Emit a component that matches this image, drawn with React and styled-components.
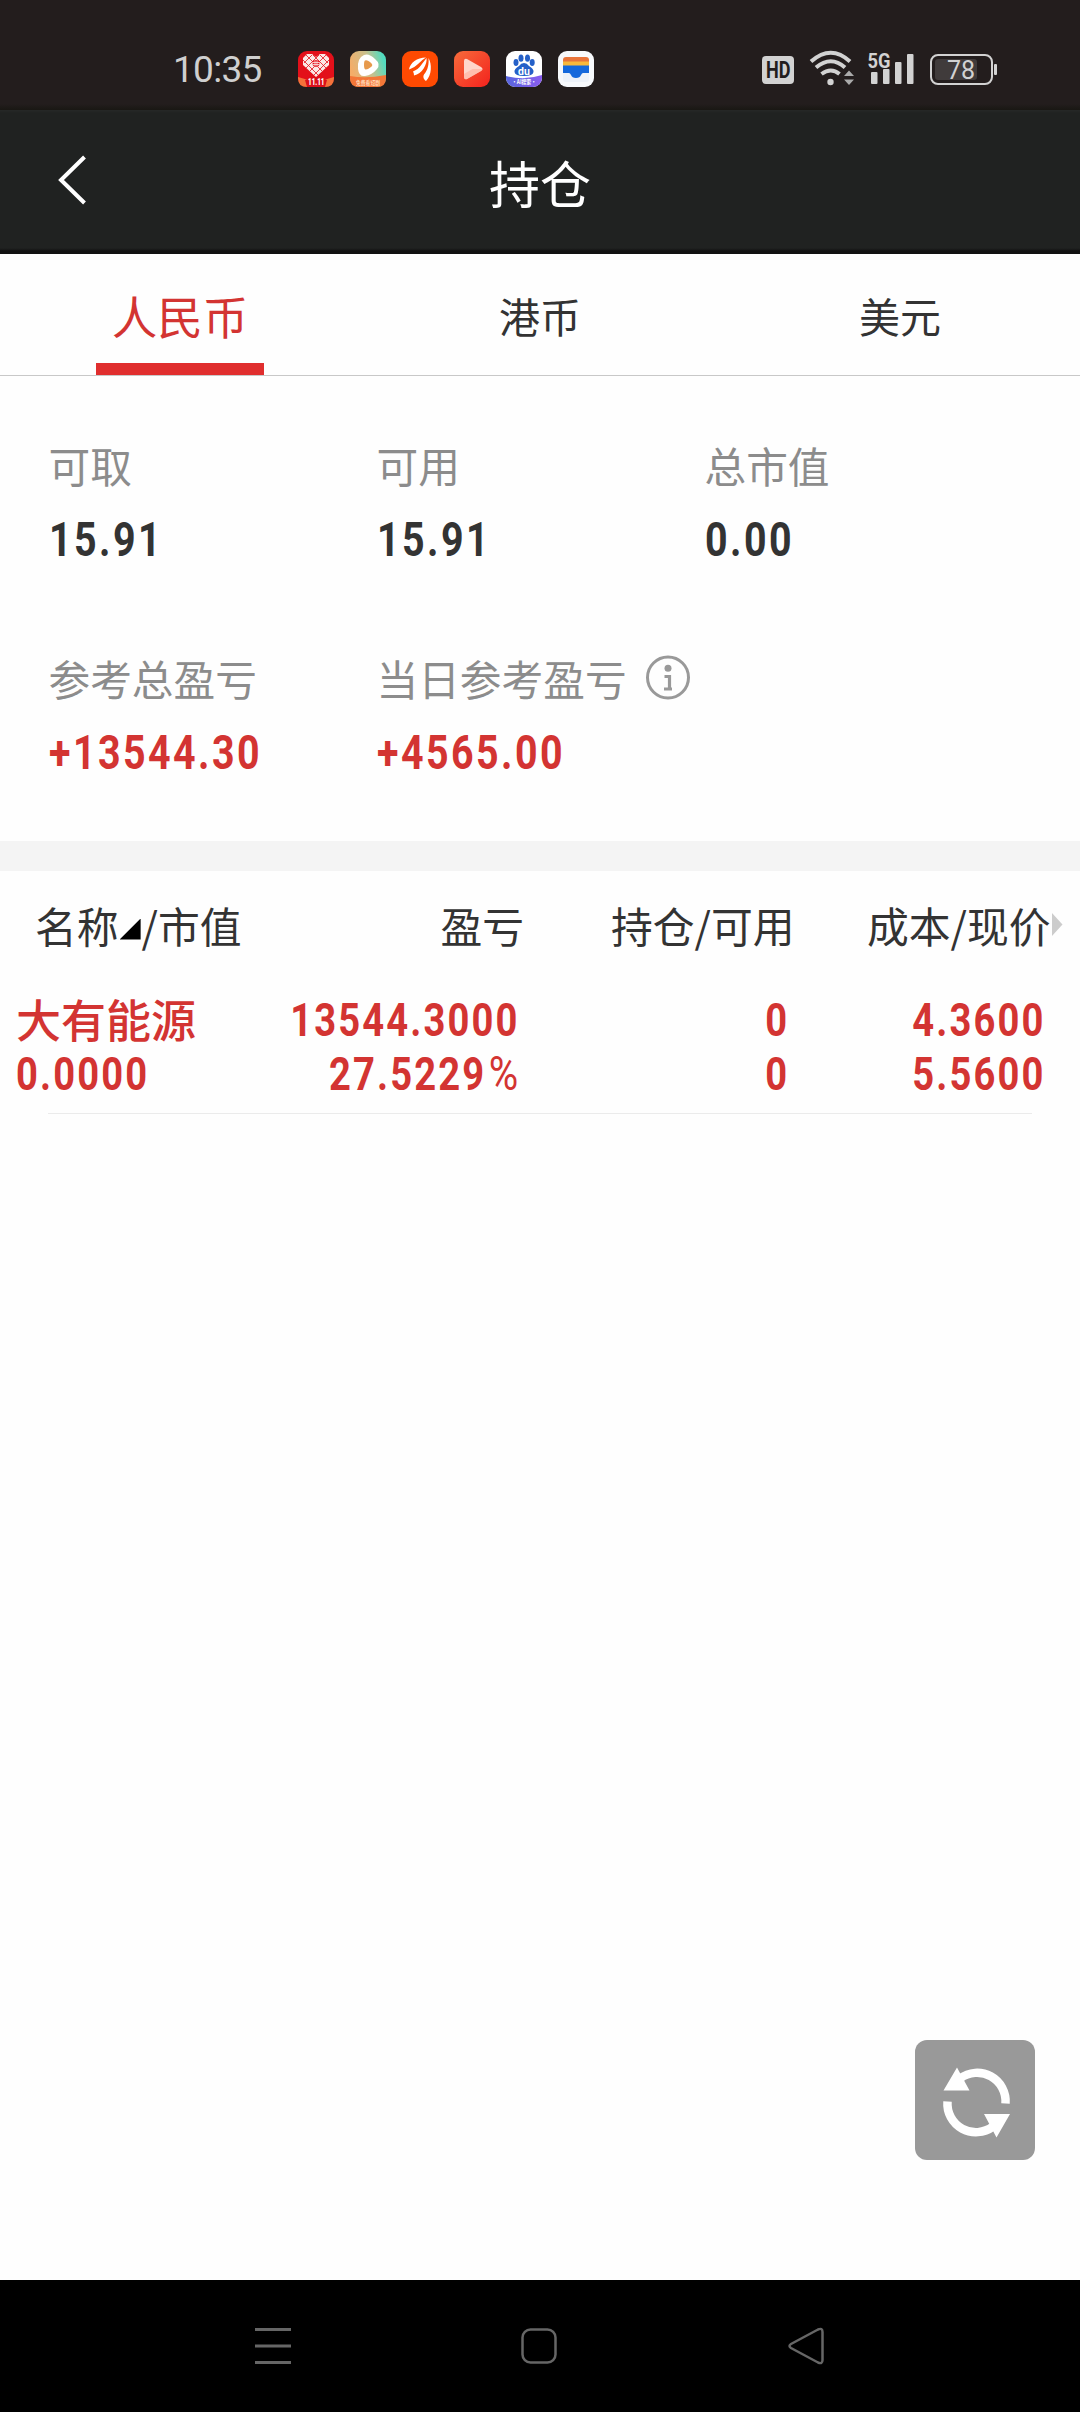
import React from "react";
import styled, { createGlobalStyle } from "styled-components";

const RED = "#d33432";
const CJK = '"Noto Sans CJK SC", sans-serif';
const DIGITS = 'Roboto, "Noto Sans CJK SC", sans-serif';

const GlobalStyle = createGlobalStyle`
  * { box-sizing: border-box; }
  body { margin: 0; background: #fefefe; }
`;

const Screen = styled.div`
  width: 1080px;
  height: 2412px;
  display: flex;
  flex-direction: column;
  background: #fefefe;
  font-family: ${CJK};
  color: #333;
  overflow: hidden;
`;

const StatusBar = styled.header`
  height: 110px;
  flex: none;
  display: flex;
  align-items: center;
  padding: 28px 82px 0 173px;
  background: linear-gradient(#231d1d 104px, #191713 110px);
`;

const Clock = styled.time`
  width: 125px;
  padding-top: 2px;
  font: 400 37px/40px Roboto, sans-serif;
  letter-spacing: -0.7px;
  color: #cfcfcf;
`;

const AppIcons = styled.div`
  display: flex;
  gap: 16px;
  svg { width: 36px; height: 36px; display: block; }
`;

const SystemIcons = styled.div`
  margin-left: auto;
  display: flex;
  svg { display: block; }
`;

const TitleBar = styled.nav`
  height: 144px;
  flex: none;
  display: grid;
  grid-template-columns: 140px 1fr 140px;
  align-items: center;
  background: linear-gradient(#262827 0, #202221 3px, #202221 138px, #111 141px);
`;

const BackButton = styled.button`
  border: 0;
  padding: 0 0 4px 57px;
  background: none;
  svg { display: block; }
`;

const Title = styled.h1`
  margin: 0;
  text-align: center;
  font-size: 51px;
  font-weight: 400;
  line-height: 60px;
  color: #fff;
`;

const Tabs = styled.div`
  height: 122px;
  flex: none;
  display: grid;
  grid-template-columns: repeat(3, 1fr);
  border-bottom: 1px solid #c8c8c8;
`;

const Tab = styled.div`
  display: flex;
  flex-direction: column;
  align-items: center;
  justify-content: space-between;
  padding-top: 31px;
  font-size: ${(p) => (p.$active ? 45.5 : 41)}px;
  line-height: 60px;
  color: ${(p) => (p.$active ? RED : "#333")};
`;

const TabMarker = styled.span`
  width: 168px;
  height: 12px;
  background: #e02e2e;
`;

const Summary = styled.section`
  height: 465px;
  flex: none;
  display: grid;
  grid-template-columns: repeat(3, 328px);
  grid-template-rows: 213px 1fr;
  padding: 59px 0 0 48.5px;
`;

const Label = styled.div`
  display: flex;
  align-items: center;
  height: 60px;
  font-size: 41.7px;
  line-height: 60px;
  color: #8c8c8c;
  white-space: nowrap;
  svg { margin-left: 18px; flex: none; }
`;

const Value = styled.div`
  width: max-content;
  margin-top: 15px;
  font-family: ${DIGITS};
  font-weight: 700;
  font-size: 48px;
  line-height: 60px;
  letter-spacing: 3px;
  transform: scaleX(0.82);
  transform-origin: left;
  color: ${(p) => (p.$gain ? RED : "#333")};
`;

const Band = styled.div`
  height: 30px;
  flex: none;
  background: #f4f4f4;
`;

const Row = styled.div`
  display: grid;
  grid-template-columns: 280px 244px 270.5px 256px 1fr;
`;

const HeadRow = styled(Row)`
  height: 107px;
  align-items: center;
  font-size: 41.8px;
  line-height: 60px;
`;

const HeadCell = styled.div`
  display: flex;
  align-items: center;
  white-space: nowrap;
  justify-content: ${(p) => (p.$first ? "flex-start" : "flex-end")};
  padding-left: ${(p) => (p.$first ? 35 : 0)}px;
`;

const SortMark = styled.i`
  width: 21px;
  height: 21px;
  margin: 9px 1px 0 1px;
  background: #000;
  clip-path: polygon(100% 0, 100% 100%, 0 100%);
`;

const MoreMark = styled.i`
  width: 11px;
  height: 24px;
  margin-left: 1px;
  background: #ccc;
  clip-path: polygon(0 0, 100% 50%, 0 100%);
`;

const Holding = styled(Row)`
  height: 135px;
  padding-top: 15px;
`;

const HoldingCell = styled.div`
  display: flex;
  flex-direction: column;
  align-items: ${(p) => (p.$first ? "flex-start" : "flex-end")};
  padding-left: ${(p) => (p.$first ? 16 : 0)}px;
  padding-right: ${(p) => p.$pad || 0}px;
  font-family: ${DIGITS};
  font-weight: 700;
  font-size: 46.5px;
  line-height: 54px;
  color: ${RED};
  white-space: nowrap;
`;

const Figure = styled.span`
  letter-spacing: 2.6px;
  transform: scaleX(0.82);
  transform-origin: ${(p) => (p.$left ? "left" : "right")};
`;

const StockName = styled.span`
  font-family: ${CJK};
  font-weight: 500;
  font-size: 45px;
  margin-top: -1px;
  margin-bottom: 1px;
`;

const Percent = styled.span`
  font-weight: 400;
  font-size: 49px;
  line-height: 0;
  margin-left: 3px;
`;

const Divider = styled.hr`
  width: 984px;
  margin: 0 48px;
  border: 0;
  height: 1px;
  background: #ebebeb;
`;

const Body = styled.main`
  flex: 1;
  display: flex;
  flex-direction: column;
`;

const RefreshButton = styled.button`
  width: 120px;
  height: 120px;
  margin: auto 45px 120px auto;
  padding: 0;
  border: 0;
  border-radius: 12px;
  background: #999;
  svg { display: block; }
`;

const NavBar = styled.footer`
  height: 132px;
  flex: none;
  display: flex;
  justify-content: space-between;
  padding: 46px 254.5px 0 252.5px;
  background: #000;
`;

const PddIcon = () => (
  <svg viewBox="0 0 36 36">
    <rect width="36" height="36" rx="9" fill="#e3101a" />
    <path d="M0 26Q18 33 36 26V27Q36 36 27 36H9Q0 36 0 27Z" fill="#f4713a" />
    <path d="M7 29Q18 24 29 29L27 36H9Z" fill="#d9101a" />
    <path d="M18 6L22 3H27L31 7V14L18 26L5 14V7L9 3H14Z" fill="#fbe9e6" />
    <path d="M6 12L14 4M8 17L21 4M12 20L28 4M16 24L31 9M30 12L22 4M28 17L15 4M24 20L8 4M20 24L5 9" stroke="#e3101a" strokeWidth=".8" />
    <circle cx="18" cy="12.500" r="3.400" fill="#e3101a" />
    <path d="M15 11.500H21M15 13.500H21M17 9.500V15.500M19 9.500V15.500" stroke="#fbe9e6" strokeWidth=".8" />
    <text x="10" y="34" textLength="16.500" lengthAdjust="spacingAndGlyphs" fontFamily="Roboto, sans-serif" fontWeight="900" fontSize="8.500" fill="#fff">11.11</text>
  </svg>
);

const VideoIcon = () => (
  <svg viewBox="0 0 36 36">
    <defs>
      <linearGradient id="video" x1="0" y1=".4" x2="1" y2=".1">
        <stop offset="0" stopColor="#f4ad68" />
        <stop offset=".5" stopColor="#c9c08d" />
        <stop offset=".9" stopColor="#52dcc0" />
      </linearGradient>
    </defs>
    <rect width="36" height="36" rx="9" fill="url(#video)" />
    <path d="M0 25Q16 28 36 24V27Q36 36 27 36H9Q0 36 0 27Z" fill="#f37738" />
    <path d="M14 4Q19 2 25 8Q31 13 27 18Q22 24 15 25Q9 26 8 18Q7 7 14 4Z" fill="#fff" />
    <path d="M15 9.500Q17 8.500 20 11Q24 14 21 16Q17 19 15.500 18.500Q14 18 14 14Q14 10 15 9.500Z" fill="#e79a4c" />
    <text x="6" y="33.500" textLength="24" lengthAdjust="spacingAndGlyphs" fontFamily='"Noto Sans CJK SC", sans-serif' fontSize="5.500" fontWeight="700" fill="#ffd9b8">免费看短剧</text>
  </svg>
);

const WingIcon = () => (
  <svg viewBox="0 0 36 36">
    <rect width="36" height="36" rx="9" fill="#fe4a02" />
    <path d="M7 18.500C8 12 15 6.500 24 6.500C19 9 15 16 7 18.500Z" fill="#fff" />
    <path d="M11 20.500C18 18 21 11 24.500 7C25.500 13 20 23 12 24.500Q12 22 11 20.500Z" fill="#fff" />
    <path d="M26.500 7C30 13 30 24 24 30C21 28 21 25 22 23.500C26 19 27 13 26.500 7Z" fill="#fff" />
  </svg>
);

const PlayIcon = () => (
  <svg viewBox="0 0 36 36">
    <defs>
      <linearGradient id="play" x1="0" y1="0" x2="1" y2="1">
        <stop offset="0" stopColor="#f76b3b" />
        <stop offset="1" stopColor="#f3221d" />
      </linearGradient>
    </defs>
    <rect width="36" height="36" rx="9" fill="url(#play)" />
    <path d="M10 10Q10 7 13 8L27 16Q30 18 27 20L13 28Q10 29 10 26Z" fill="#ffd6cb" />
    <path d="M18.500 18L28.500 18Q28 19.500 27 20L13 28Q10 29 10 26V23Z" fill="#ffb3a3" opacity=".7" />
  </svg>
);

const DuIcon = () => (
  <svg viewBox="0 0 36 36">
    <defs>
      <clipPath id="duClip"><rect width="36" height="36" rx="9" /></clipPath>
      <linearGradient id="du">
        <stop offset="0" stopColor="#5866df" />
        <stop offset="1" stopColor="#8a5cf0" />
      </linearGradient>
    </defs>
    <g clipPath="url(#duClip)">
      <rect width="36" height="36" fill="#fff" />
      <path d="M0 25Q18 30 36 24V36H0Z" fill="url(#du)" />
      <g fill="#2560c8">
        <ellipse cx="10" cy="11.500" rx="2.500" ry="3.400" />
        <ellipse cx="15" cy="7.200" rx="2.500" ry="3.600" />
        <ellipse cx="21.500" cy="7.200" rx="2.500" ry="3.600" />
        <ellipse cx="26.200" cy="11.500" rx="2.500" ry="3.400" />
        <path d="M18 12Q21 12 23 15Q28 18 27.500 21Q27 25 18 25Q9 25 8.500 21Q8 18 13 15Q15 12 18 12Z" />
      </g>
      <text x="18" y="23.500" textAnchor="middle" fontFamily="Roboto, sans-serif" fontWeight="700" fontSize="10.500" fill="#fff">du</text>
      <text x="6" y="33.300" textLength="24" lengthAdjust="spacingAndGlyphs" fontFamily='"Noto Sans CJK SC", sans-serif' fontWeight="700" fontSize="6" fill="#fff">·AI搜索·</text>
    </g>
  </svg>
);

const WalletIcon = () => (
  <svg viewBox="0 0 36 36">
    <rect width="36" height="36" rx="9" fill="#f7f9fc" />
    <path d="M5 22H31V28Q31 31 28 31H8Q5 31 5 28Z" fill="#edf2f9" />
    <path d="M5 9Q5 6 8 6H28Q31 6 31 9V14H5Z" fill="#e8743b" />
    <path d="M5 10.500H31V16H5Z" fill="#f9b93c" />
    <path d="M5 14.500H31V22H25Q24 22 23 24Q22 27 18 27Q14 27 13 24Q12 22 11 22H5Z" fill="#1468dc" />
  </svg>
);

const SystemGlyphs = () => (
  <svg width="240" height="40" viewBox="758 49 240 40" fill="#d2d2d2">
    <rect x="762" y="56" width="32" height="28" rx="4" />
    <text x="766" y="78" textLength="24.500" lengthAdjust="spacingAndGlyphs" fontFamily="Roboto, sans-serif" fontWeight="700" fontSize="23" fill="#231d1d">HD</text>
    <g fill="none" stroke="#d2d2d2" strokeWidth="4">
      <path d="M811 61.500Q831 44 850 61.500" />
      <path d="M816 67.500Q831 55 845 67.500" />
      <path d="M821.500 74Q831 67 839.500 74" />
    </g>
    <circle cx="830.500" cy="82" r="3.200" />
    <path d="M844 76L849 70.500L854 76ZM844 79.500H854L849 85Z" fill="#aaa" />
    <text x="867.500" y="67.500" textLength="23" lengthAdjust="spacingAndGlyphs" fontFamily="Roboto, sans-serif" fontWeight="700" fontSize="21">5G</text>
    <rect x="871" y="72" width="6.500" height="12" rx="1" />
    <rect x="883" y="69" width="6.500" height="15" rx="1" />
    <rect x="895" y="62" width="6.500" height="22" rx="1" />
    <rect x="907" y="54" width="6.500" height="30" rx="1" />
    <rect x="931" y="55" width="61" height="29" rx="7" fill="none" stroke="#d2d2d2" strokeWidth="2" />
    <rect x="935" y="59" width="42" height="21" rx="3" fill="#403b3b" />
    <rect x="994" y="64" width="3" height="11" rx="1" />
    <text x="961" y="78.500" textAnchor="middle" fontFamily="Roboto, sans-serif" fontSize="25">78</text>
  </svg>
);

const InfoGlyph = () => (
  <svg width="46" height="46" viewBox="0 0 46 46">
    <circle cx="23" cy="22.500" r="20.500" fill="none" stroke="#999" strokeWidth="3" />
    <circle cx="23" cy="13.300" r="3.500" fill="#999" />
    <path d="M19.500 21.500H24.500V33M19 34H27" fill="none" stroke="#999" strokeWidth="3.200" />
  </svg>
);

const RefreshGlyph = () => (
  <svg width="120" height="120" viewBox="0 0 120 120">
    <g fill="none" stroke="#fff" strokeWidth="8.500">
      <path d="M45 38.500A28.500 28.500 0 0 1 90.500 63.500" />
      <path d="M32.500 61.500A28.500 28.500 0 0 0 78 86.500" />
    </g>
    <path d="M42 27.500L54.500 50.500H28.500ZM81.500 97.500L69 74H95Z" fill="#fff" />
  </svg>
);

const stats = [
  { label: "可取", value: "15.91" },
  { label: "可用", value: "15.91" },
  { label: "总市值", value: "0.00" },
  { label: "参考总盈亏", value: "+13544.30", gain: true },
  { label: "当日参考盈亏", value: "+4565.00", gain: true, info: true },
];

export default function App() {
  return (
    <Screen>
      <GlobalStyle />
      <StatusBar>
        <Clock>10:35</Clock>
        <AppIcons>
          <PddIcon />
          <VideoIcon />
          <WingIcon />
          <PlayIcon />
          <DuIcon />
          <WalletIcon />
        </AppIcons>
        <SystemIcons>
          <SystemGlyphs />
        </SystemIcons>
      </StatusBar>
      <TitleBar>
        <BackButton aria-label="返回">
          <svg width="30" height="50" viewBox="0 0 30 50">
            <path d="M27.500 2L4 25L27.500 48" fill="none" stroke="#fff" strokeWidth="4" />
          </svg>
        </BackButton>
        <Title>持仓</Title>
      </TitleBar>
      <Tabs>
        <Tab $active>
          人民币
          <TabMarker />
        </Tab>
        <Tab>港币</Tab>
        <Tab>美元</Tab>
      </Tabs>
      <Summary>
        {stats.map((s) => (
          <div key={s.label}>
            <Label>
              {s.label}
              {s.info && <InfoGlyph />}
            </Label>
            <Value $gain={s.gain}>{s.value}</Value>
          </div>
        ))}
      </Summary>
      <Band />
      <Body>
        <HeadRow>
          <HeadCell $first>
            名称
            <SortMark />
            /市值
          </HeadCell>
          <HeadCell>盈亏</HeadCell>
          <HeadCell>持仓/可用</HeadCell>
          <HeadCell>成本/现价</HeadCell>
          <MoreMark />
        </HeadRow>
        <Holding>
          <HoldingCell $first>
            <StockName>大有能源</StockName>
            <Figure $left>0.0000</Figure>
          </HoldingCell>
          <HoldingCell $pad={4}>
            <Figure>13544.3000</Figure>
            <Figure>
              27.5229<Percent>%</Percent>
            </Figure>
          </HoldingCell>
          <HoldingCell $pad={5}>
            <Figure>0</Figure>
            <Figure>0</Figure>
          </HoldingCell>
          <HoldingCell $pad={5}>
            <Figure>4.3600</Figure>
            <Figure>5.5600</Figure>
          </HoldingCell>
        </Holding>
        <Divider />
        <RefreshButton aria-label="刷新">
          <RefreshGlyph />
        </RefreshButton>
      </Body>
      <NavBar>
        <svg width="40" height="40" viewBox="0 0 40 40" stroke="#666" strokeWidth="3">
          <path d="M2 3.500H38M2 20H38M2 36.500H38" />
        </svg>
        <svg width="40" height="40" viewBox="0 0 40 40" fill="none" stroke="#666" strokeWidth="2.500">
          <rect x="3.500" y="3.500" width="33" height="33" rx="8" />
        </svg>
        <svg width="40" height="40" viewBox="0 0 40 40" fill="none" stroke="#666" strokeWidth="2.500">
          <path d="M32 3.500Q36.500 1.500 36.500 6V34Q36.500 38.500 32 36.500L5 22Q2 20 5 18Z" />
        </svg>
      </NavBar>
    </Screen>
  );
}
